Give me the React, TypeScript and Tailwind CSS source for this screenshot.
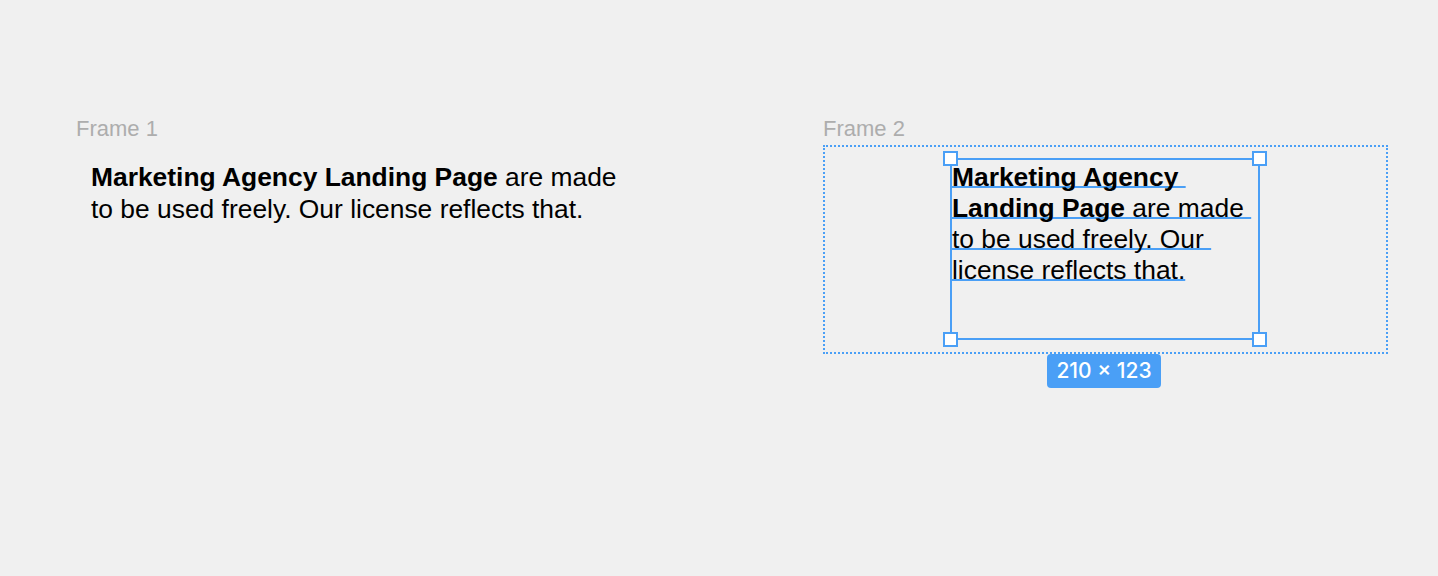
import React from "react";

const BLUE = "#4a9ff6";

const lines = [
  { bold: "Marketing Agency ", rest: "" },
  { bold: "Landing Page", rest: " are made " },
  { bold: "", rest: "to be used freely. Our " },
  { bold: "", rest: "license reflects that." },
];

function Handle({ className }: { className: string }) {
  return (
    <div
      className={`absolute h-[15px] w-[15px] border-2 border-[#4a9ff6] bg-white ${className}`}
    />
  );
}

export default function App() {
  return (
    <div
      className="flex min-h-screen bg-[#f0f0f0] pl-[76px] pt-[116px] text-black"
      style={{ fontFamily: '"Liberation Sans", Arial, sans-serif' }}
    >
      {/* Frame 1 */}
      <div className="w-[747px] shrink-0">
        <div className="h-[29px] text-[22px] leading-[26px] text-[#adadad]">Frame 1</div>
        <div className="px-[15px] pt-[16px] text-[26.4px] leading-[32px]">
          <span className="font-bold">Marketing Agency Landing Page</span> are made
          <br />
          to be used freely. Our license reflects that.
        </div>
      </div>

      {/* Frame 2 */}
      <div className="shrink-0">
        <div className="h-[29px] text-[22px] leading-[26px] text-[#adadad]">Frame 2</div>
        <div className="relative h-[209px] w-[565px] border-2 border-dotted border-[#4a9ff6]">
          <div className="relative ml-[125px] mt-[11px] h-[182px] w-[310px] border-2 border-[#4a9ff6]">
            <div className="pt-[2px] text-[26.4px] leading-[31px]">
              {lines.map((l, i) => (
                <div key={i} className="whitespace-pre">
                  <span
                    className="underline decoration-2 underline-offset-0 [text-decoration-skip-ink:none]"
                    style={{ textDecorationColor: BLUE }}
                  >
                    {l.bold && <span className="font-bold">{l.bold}</span>}
                    {l.rest}
                  </span>
                </div>
              ))}
            </div>
            <Handle className="-left-[9px] -top-[9px]" />
            <Handle className="-right-[9px] -top-[9px]" />
            <Handle className="-bottom-[9px] -left-[9px]" />
            <Handle className="-bottom-[9px] -right-[9px]" />
          </div>
          {/* size badge */}
          <div
            className="absolute left-[222px] top-[207px] flex h-[34px] w-[114px] items-center justify-center rounded-[4px] bg-[#4a9ff6] text-[21px] font-medium text-white"
            style={{ fontFamily: "Inter, sans-serif" }}
          >
            210 × 123
          </div>
        </div>
      </div>
    </div>
  );
}
